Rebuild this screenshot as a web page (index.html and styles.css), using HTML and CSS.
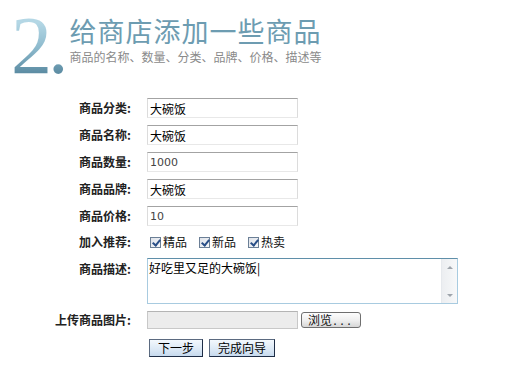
FILE: index.html
```html
<!DOCTYPE html>
<html lang="zh-CN">
<head>
<meta charset="utf-8">
<title>给商店添加一些商品</title>
<link rel="stylesheet" href="styles.css">
</head>
<body>
<div class="header">
  <div class="num">2.</div>
  <div class="titles">
    <h1 class="title">给商店添加一些商品</h1>
    <p class="subtitle">商品的名称、数量、分类、品牌、价格、描述等</p>
  </div>
</div>
<form class="form">
  <label class="lbl">商品分类:</label>
  <div class="ctl"><input class="txt" type="text" value="大碗饭"></div>

  <label class="lbl">商品名称:</label>
  <div class="ctl"><input class="txt" type="text" value="大碗饭"></div>

  <label class="lbl">商品数量:</label>
  <div class="ctl"><input class="txt num-in" type="text" value="1000"></div>

  <label class="lbl">商品品牌:</label>
  <div class="ctl"><input class="txt" type="text" value="大碗饭"></div>

  <label class="lbl">商品价格:</label>
  <div class="ctl"><input class="txt num-in" type="text" value="10"></div>

  <label class="lbl lbl-chk">加入推荐:</label>
  <div class="ctl checks">
    <label class="chk"><input type="checkbox" checked>精品</label>
    <label class="chk"><input type="checkbox" checked>新品</label>
    <label class="chk"><input type="checkbox" checked>热卖</label>
  </div>

  <label class="lbl lbl-area">商品描述:</label>
  <div class="ctl">
    <div class="area-box">
      <textarea class="area">好吃里又足的大碗饭|</textarea>
      <div class="sbar"><span class="arr up"></span><span class="arr down"></span></div>
    </div>
  </div>

  <label class="lbl lbl-file">上传商品图片:</label>
  <div class="ctl file">
    <input class="file-path" type="text" readonly>
    <button type="button" class="browse">浏览<span class="dots">...</span></button>
  </div>

  <div class="spacer"></div>
  <div class="ctl actions">
    <button type="button" class="btn">下一步</button>
    <button type="button" class="btn">完成向导</button>
  </div>
</form>
</body>
</html>
```
FILE: styles.css
```css
html, body {
  margin: 0;
  padding: 0;
  background: #ffffff;
}
body {
  font-family: "Noto Sans CJK SC", "DejaVu Sans", sans-serif;
  font-size: 12px;
  color: #222;
}

.header {
  display: flex;
  align-items: flex-start;
  padding-left: 11px;
  height: 85px;
}
.num {
  margin-top: -1px;
  font-family: "Liberation Serif", serif;
  font-size: 82px;
  line-height: normal;
  letter-spacing: -4px;
  padding-right: 4px;
  background: linear-gradient(180deg, #b4d7e5 25%, #8dbacd 52%, #5a8aa1 80%);
  -webkit-background-clip: text;
  background-clip: text;
  color: transparent;
}
.titles {
  margin-left: 1px;
  margin-top: 17px;
}
.title {
  margin: 0;
  font-family: "Noto Sans CJK SC", sans-serif;
  font-weight: 400;
  font-size: 27px;
  line-height: 28px;
  color: #6d9cb1;
  letter-spacing: 1px;
}
.subtitle {
  margin: 5px 0 0 0;
  font-size: 12px;
  line-height: 14px;
  color: #8a8a8a;
}

.form {
  margin-top: 13px;
  display: grid;
  grid-template-columns: 131px auto;
  column-gap: 16px;
  row-gap: 7px;
  align-items: start;
}
.lbl {
  text-align: right;
  font-weight: 700;
  font-size: 12px;
  line-height: 20px;
  color: #222;
}
.lbl-chk { line-height: 18px; }
.lbl-area { padding-top: 3px; line-height: 16px; }
.lbl-file { line-height: 18px; }

.ctl {
  display: flex;
  align-items: center;
}
.txt {
  box-sizing: border-box;
  width: 151px;
  height: 20px;
  margin: 0;
  padding: 0 2px;
  border: 1px solid #dcdcdc;
  border-top-color: #a3a3a3;
  border-bottom-color: #e8e8e8;
  font-family: "Noto Sans CJK SC", sans-serif;
  font-size: 12px;
  color: #000;
  background: #fff;
  outline: none;
}
.num-in {
  font-family: "DejaVu Sans", sans-serif;
  font-size: 11px;
  color: #444;
}

.checks {
  height: 18px;
}
.chk {
  display: flex;
  align-items: center;
  font-size: 12px;
  line-height: 18px;
  color: #111;
  margin-right: 9px;
}
.chk input {
  -webkit-appearance: none;
  appearance: none;
  box-sizing: border-box;
  width: 11px;
  height: 11px;
  margin: 0 2px 0 3px;
  border: 1px solid #6b7f96;
  background: linear-gradient(135deg, #dfe3ea 0%, #f6f7f9 100%);
  position: relative;
}
.chk input:checked::after {
  content: "";
  position: absolute;
  left: 3px;
  top: 0px;
  width: 3px;
  height: 6px;
  border: solid #2a4f88;
  border-width: 0 2px 2px 0;
  transform: rotate(40deg);
}

.area-box {
  box-sizing: border-box;
  display: flex;
  width: 311px;
  height: 46px;
  border: 1px solid #a8cbe0;
  border-top-color: #5f8fa9;
  background: #fff;
}
.area {
  flex: 1;
  box-sizing: border-box;
  height: 100%;
  margin: 0;
  padding: 1px 1px;
  border: none;
  font-family: "Noto Sans CJK SC", sans-serif;
  font-size: 12px;
  line-height: 16px;
  color: #000;
  resize: none;
  overflow: hidden;
  outline: none;
}
.sbar {
  width: 15px;
  display: flex;
  flex-direction: column;
  justify-content: space-between;
  align-items: center;
  padding: 7px 0 6px 0;
  border-left: 1px solid #e6e9ed;
  background: linear-gradient(90deg, #eceef1, #f7f8f9);
}
.arr {
  width: 0;
  height: 0;
  border-left: 3px solid transparent;
  border-right: 3px solid transparent;
}
.arr.up { border-bottom: 3px solid #9ea4ab; }
.arr.down { border-top: 3px solid #9ea4ab; }

.file {
  height: 18px;
}
.file-path {
  box-sizing: border-box;
  width: 151px;
  height: 18px;
  margin: 0;
  border: 1px solid #c8c8c8;
  border-top-color: #b4b4b4;
  background: #ececec;
  outline: none;
}
.browse {
  box-sizing: border-box;
  margin-left: 3px;
  width: 60px;
  height: 16px;
  padding: 0 0 0 6px;
  border: 1px solid #6f6f6f;
  border-radius: 3px;
  background: linear-gradient(180deg, #fdfdfd 0%, #eeeeee 55%, #d6d6d6 100%);
  font-family: "Noto Sans CJK SC", sans-serif;
  font-size: 12px;
  line-height: 14px;
  color: #111;
  text-align: left;
}
.dots {
  font-family: "DejaVu Sans Mono", monospace;
  font-size: 10px;
  letter-spacing: 1px;
}

.spacer { height: 1px; }
.actions {
  margin-top: 3px;
  gap: 6px;
  padding-left: 2px;
}
.btn {
  box-sizing: border-box;
  height: 18px;
  margin: 0;
  padding: 0 8px;
  border: 1px solid #1e2d46;
  border-top-color: #5b6a80;
  border-left-color: #5b6a80;
  background: linear-gradient(180deg, #f3f8fd 0%, #dbe8f5 60%, #c7daee 100%);
  font-family: "Noto Sans CJK SC", sans-serif;
  font-size: 12px;
  line-height: 16px;
  color: #000;
}
```
